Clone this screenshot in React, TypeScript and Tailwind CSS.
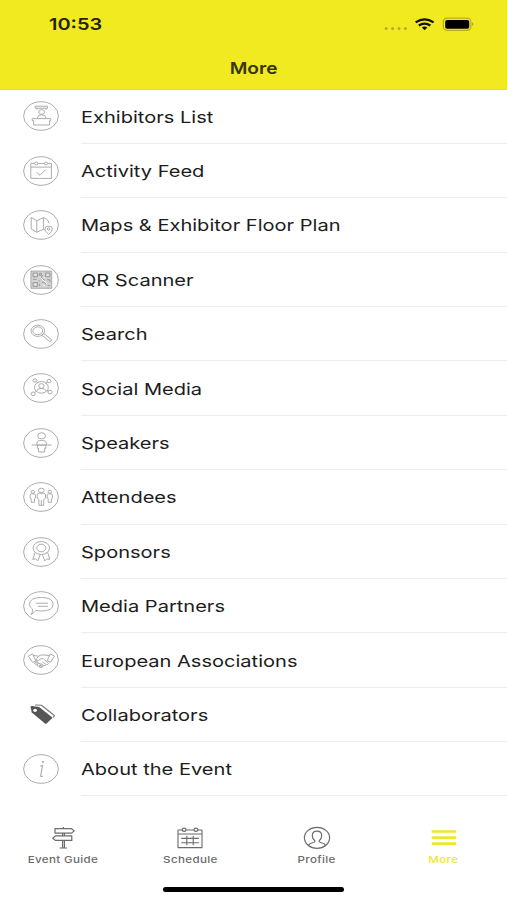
import React from 'react';

type MenuItem = {
    label: string;
    icon: React.ReactNode;
    noRing?: boolean;
};

const ExhibitorsIcon = () => (
    <>
        <path d="M12.2 5.2h12.4v2H12.2zM14 7.4v1.4M23 7.4v1.4" />
        <ellipse cx="18.6" cy="11" rx="2.9" ry="2.4" />
        <path d="M14.6 17.6v-1.4q0-2.4 4-2.4t4 2.4v1.4M9.2 17.6h18.6v2h-1.2v4.4H10.6v-4.4H9.2z" />
    </>
);

const ActivityIcon = () => (
    <>
        <path d="M11.8 7.4H7.8v15h20.6v-15h-4M14.8 7.4h6.6M7.8 11.1h20.6M13.6 16.5l3.4 2.8 5.6-5.6" />
        <ellipse cx="13.3" cy="7.5" rx="1.6" ry="1.4" />
        <ellipse cx="22.9" cy="7.5" rx="1.6" ry="1.4" />
    </>
);

const MapIcon = () => (
    <>
        <path d="M8.2 7.5l5.6 3.2v11.6l-5.6-3.4zM13.8 10.7l6.6-3v11.5l-6.6 3.1M20.4 7.7q5 1.3 5.5 5.6M20.4 19.2l1.5 1" />
        <path d="M25.6 24.3q-3.8-3-3.8-5.3 0-2.9 3.8-2.9t3.8 2.9q0 2.3-3.8 5.3z" />
        <circle cx="25.6" cy="19" r="1.2" />
    </>
);

const QrIcon = () => (
    <>
        <rect x="7.9" y="6.1" width="20.8" height="17.2" fill="#d4d4d4" />
        <path d="M10 8h4.6v3.8H10zM22.4 8H27v3.8h-4.6zM10 17.6h4.6v3.8H10z" stroke="#969696" />
        <path d="M16.5 8.3h2v2h-2zM19.4 10.4l-1.6 3.2 4 1.5M10 14.4h3.6M16.6 18.8v2.5M19 17.3h3.4v2M24 14.8h3v2.6M24.5 20.6H27M15.6 16h1.6" stroke="#969696" />
        <path d="M17.4 12.5l6.4 6.2M20.2 20.4h1.5M11.6 9.9H13M24 9.9h1.4M11.6 19.5H13M20.8 12.7h1" stroke="#fff" />
    </>
);

const SearchIcon = () => (
    <>
        <ellipse cx="14.8" cy="11.8" rx="6.8" ry="5.6" />
        <ellipse cx="14.8" cy="11.8" rx="4.9" ry="3.9" />
        <path d="M18.8 16.2l2-1.7 7.6 6q.4 2-2 1.8z" />
    </>
);

const SocialIcon = () => (
    <>
        <ellipse cx="18.4" cy="14.4" rx="6.9" ry="5.8" />
        <ellipse cx="18.4" cy="13" rx="2.7" ry="2.3" />
        <path d="M13.6 18.4q.3-2.9 4.8-2.9t4.8 2.9M13.4 8.5l1.8 1.6M24.6 9l-2.2 1.4M11.6 19.7l1.6-1.4M25.4 18.3l-1.8-1" />
        <ellipse cx="12" cy="7.5" rx="2" ry="1.7" />
        <ellipse cx="26" cy="8.1" rx="2" ry="1.7" />
        <ellipse cx="10.2" cy="20.8" rx="2.1" ry="1.8" />
        <ellipse cx="27" cy="19.1" rx="2.1" ry="1.8" />
    </>
);

const SpeakerIcon = () => (
    <>
        <ellipse cx="18.6" cy="7.8" rx="3.9" ry="3.1" />
        <path d="M13.9 17v-2q0-2.6 4.7-2.6t4.7 2.6v2M8.7 17h19.8M14.4 17.2h8.4v3.2h-1.2V24h-6v-3.6h-1.2z" />
    </>
);

const AttendeesIcon = () => (
    <>
        <ellipse cx="18.3" cy="8.4" rx="2.9" ry="2.2" />
        <path d="M14.2 12.8q0-1.6 2-1.6h4.3q2 0 2 1.6v3.5l-1.8 1.2v5.8h-4.8v-5.8l-1.7-1.2zM18.3 18v5" />
        <ellipse cx="9.8" cy="9.8" rx="1.8" ry="1.4" />
        <path d="M7.2 13.1q0-1.2 1.3-1.2h2.6q1.3 0 1.3 1.2v3l-1 .6v3.6H8.2v-3.6l-1-.6z" />
        <ellipse cx="26.8" cy="9.8" rx="1.8" ry="1.4" />
        <path d="M24.2 13.1q0-1.2 1.3-1.2h2.6q1.3 0 1.3 1.2v3l-1 .6v3.6h-3.2v-3.6l-1-.6z" />
    </>
);

const SponsorIcon = () => (
    <>
        <ellipse cx="18.3" cy="11" rx="8.2" ry="6.5" />
        <ellipse cx="18.3" cy="11" rx="4.5" ry="3.8" />
        <path d="M12 15.3L9.8 22.4l3-.5 2 2 2.4-6.3M24.6 15.3l2.2 7.1-3-.5-2 2-2.4-6.3" />
    </>
);

const MediaIcon = () => (
    <path d="M9.6 18.2q-3.1-2-3.1-4.9 0-6.8 11.8-6.8t11.8 6.8q0 6.7-11.8 6.7-3 0-5.3-.7-1.9 2.5-5 4.2 2-2.5 1.6-5.3zM12.8 12.2H25M15 15.3h10" />
);

const HandshakeIcon = () => (
    <>
        <path d="M5.4 11.2l4.2-2.3 3.2 6.9-3.2 1.6zM31.6 11.2l-4.3-2.3-3.1 6.9 3.2 1.6z" />
        <path d="M10.2 10.4l5.2.8 3-1.3 8.4.6M11.8 16.6l2 1.2M15.4 11.3l-2.4 3.8q2.2 1.6 4.9-1.4h2.4l5.2 4.6q-.2 1.6-2.2 1.2-.4 1.6-2.5 1.1-1 1.7-2.8.6l-1.3-.8" />
        <path d="M11.4 18.3l2.2-1.9 1.7 1.1-2.2 2zM13.7 20.2l2.2-2 1.7 1.1-2 2zM16.2 21.9l1.9-1.9 1.6 1.2-1.7 1.6zM19.4 16.8l3.8 2.6M17.6 18.3l3 2.1" />
    </>
);

const TagIcon = () => (
    <>
        <path d="M7.6 7.3l1.2 5.2 13.2 10.9q.8.6 1.6 0l5.2-4.9q.7-.7-.1-1.4L16.2 7.1 9.2 6q-1.8-.1-1.6 1.3z" fill="#555" stroke="none" />
        <ellipse cx="12.1" cy="10.3" rx="1.9" ry="1.6" fill="#fff" stroke="none" />
        <path d="M12.2 5l6.3.3 13.1 10.4-2 2" stroke="#777" strokeWidth="1.1" />
    </>
);

const InfoIcon = () => (
    <>
        <ellipse cx="20" cy="7.8" rx="1.1" ry=".9" fill="#a0a0a0" stroke="none" />
        <path d="M17.2 12.3q1.4-.9 2.4-.8L17.7 21.3q-.3 1.9 2.1.7" strokeWidth="1.1" />
    </>
);

const menuItems: MenuItem[] = [
    { label: 'Exhibitors List', icon: <ExhibitorsIcon /> },
    { label: 'Activity Feed', icon: <ActivityIcon /> },
    { label: 'Maps & Exhibitor Floor Plan', icon: <MapIcon /> },
    { label: 'QR Scanner', icon: <QrIcon /> },
    { label: 'Search', icon: <SearchIcon /> },
    { label: 'Social Media', icon: <SocialIcon /> },
    { label: 'Speakers', icon: <SpeakerIcon /> },
    { label: 'Attendees', icon: <AttendeesIcon /> },
    { label: 'Sponsors', icon: <SponsorIcon /> },
    { label: 'Media Partners', icon: <MediaIcon /> },
    { label: 'European Associations', icon: <HandshakeIcon /> },
    { label: 'Collaborators', icon: <TagIcon />, noRing: true },
    { label: 'About the Event', icon: <InfoIcon /> },
];

const tabs = [
    {
        label: 'Event Guide',
        icon: (
            <path d="M14.4 1v1.3M6 2.7h16.6l2.6 2.2-2.6 2.2H6zM13.6 7.2v2.6M15.4 7.2v2.6M22.8 9.9H6.3l-2.6 2.3 2.6 2.2h16.5zM13.6 14.5v7.2M15.4 14.5v7.2M10.6 22H18" />
        ),
    },
    {
        label: 'Schedule',
        icon: (
            <>
                <path d="M6.2 4H2v17.6h24V4h-4.2M10 4h8M2 8h24M5.2 12.4h17.6M5.2 16.7h17.6M10.8 9.8v9.4M17.2 9.8v9.4" strokeWidth="1.1" />
                <ellipse cx="8.1" cy="3.7" rx="1.9" ry="1.6" />
                <ellipse cx="19.9" cy="3.7" rx="1.9" ry="1.6" />
            </>
        ),
    },
    {
        label: 'Profile',
        icon: (
            <>
                <ellipse cx="14" cy="11.8" rx="12.6" ry="10.5" />
                <path d="M5.4 19.2q1-2 4.8-2.7 2.3-.5 1.4-2.1-2.3-2-2.3-4.7 0-4.6 4.7-4.6t4.7 4.6q0 2.7-2.3 4.7-.9 1.6 1.4 2.1 3.8.7 4.8 2.7" />
            </>
        ),
    },
    {
        label: 'More',
        icon: <path d="M2.8 5.5h22.4M2.8 11.6h22.4M2.8 17.6h22.4" strokeWidth="2.6" strokeLinecap="round" />,
        active: true,
    },
];

const StatusBar = () => (
    <div className="flex h-[48px] items-center justify-between pl-[48.5px] pr-[31px]">
        <span className="origin-left scale-x-[1.21] text-[16.5px] leading-5 font-semibold text-[#242200]">10:53</span>
        <svg width="92" height="20" viewBox="0 0 92 20" className="mr-px">
            <g fill="#b5ac28">
                <circle cx="3.2" cy="14.5" r="1.5" />
                <circle cx="9.6" cy="14.5" r="1.5" />
                <circle cx="16" cy="14.5" r="1.5" />
                <circle cx="22.4" cy="14.5" r="1.5" />
            </g>
            <g fill="none" stroke="#111" strokeWidth="2.2">
                <path d="M32.6 8.4q9-6.2 18 0" />
                <path d="M35.8 11.5q5.8-3.9 11.6 0" />
            </g>
            <path d="M38.8 13.4q2.8-1.8 5.6 0l-2.8 2.9z" fill="#111" />
            <rect x="60.3" y="4.2" width="27.6" height="12.2" rx="3.6" fill="none" stroke="#b7ad1e" strokeWidth="1.2" />
            <rect x="62.2" y="6" width="24" height="8.8" rx="1.8" fill="#000" />
            <path d="M89.2 8.3q2.4 1.9 0 3.8z" fill="#a59b1c" />
        </svg>
    </div>
);

const App: React.FC = () => {
    return (
        <div className="flex h-[900px] w-[507px] flex-col overflow-hidden bg-white font-['Inter',sans-serif]">
            <header className="h-[90px] shrink-0 border-b border-[#e6dc3c] bg-[#f2ea20]">
                <StatusBar />
                <h1 className="pt-[10px] text-center text-[16.5px] leading-5 font-semibold text-[#38350a]">
                    <span className="inline-block scale-x-[1.16]">More</span>
                </h1>
            </header>

            <ul className="-mt-[0.6px] flex-grow">
                {menuItems.map((item) => (
                    <li key={item.label} className="flex h-[54.4px] pl-[23px]">
                        <svg
                            className="mt-[12px] shrink-0"
                            width="36"
                            height="30"
                            viewBox="0 0 36 30"
                            fill="none"
                            stroke="#a8a8a8"
                            strokeWidth="0.95"
                            strokeLinejoin="round"
                        >
                            {!item.noRing && <ellipse cx="18" cy="15" rx="17.4" ry="14.3" />}
                            {item.icon}
                        </svg>
                        <div className="ml-[22px] flex flex-grow items-center border-b border-[#ececec] pt-[1px]">
                            <span className="origin-left scale-x-[1.215] text-[16.5px] leading-5 whitespace-nowrap text-[#1c1c1c]">
                                {item.label}
                            </span>
                        </div>
                    </li>
                ))}
            </ul>

            <nav className="grid h-[104px] shrink-0 grid-cols-4 pt-[30px]">
                {tabs.map((tab) => (
                    <div key={tab.label} className={`flex flex-col items-center ${tab.active ? 'text-[#f0e62c]' : 'text-[#6b6b6b]'}`}>
                        <svg width="28" height="24" viewBox="0 0 28 24" fill="none" stroke="currentColor" strokeWidth="1.2" strokeLinejoin="round">
                            {tab.icon}
                        </svg>
                        <span className="mt-[4px] scale-x-[1.22] text-[9.5px] leading-[12px] font-medium tracking-[0.03em] whitespace-nowrap">
                            {tab.label}
                        </span>
                    </div>
                ))}
                <div className="col-span-4 mx-auto mt-[13px] h-[5px] w-[181px] shrink-0 rounded-full bg-black" />
            </nav>
        </div>
    );
};

export default App;
